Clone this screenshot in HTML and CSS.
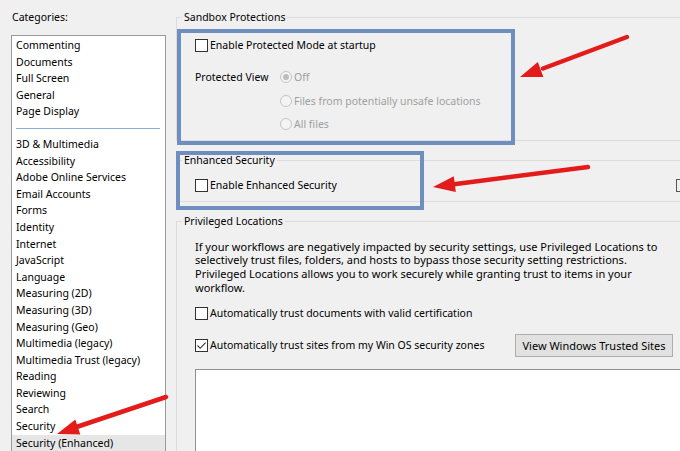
FILE: index.html
```html
<!DOCTYPE html>
<html lang="en">

<head>
    <meta charset="UTF-8">
    <meta name="viewport" content="width=device-width, initial-scale=1.0">
    <title>Preferences - Security (Enhanced)</title>

    <link rel="stylesheet" href="styles.css">
</head>

<body>

    <div class="window">
        <aside class="sidebar">
            <div class="cat-label">Categories:</div>
            <ul class="cat-list">
                <li>Commenting</li>
                <li>Documents</li>
                <li>Full Screen</li>
                <li>General</li>
                <li>Page Display</li>
                <li class="sep"></li>
                <li>3D &amp; Multimedia</li>
                <li>Accessibility</li>
                <li>Adobe Online Services</li>
                <li>Email Accounts</li>
                <li>Forms</li>
                <li>Identity</li>
                <li>Internet</li>
                <li>JavaScript</li>
                <li>Language</li>
                <li>Measuring (2D)</li>
                <li>Measuring (3D)</li>
                <li>Measuring (Geo)</li>
                <li>Multimedia (legacy)</li>
                <li>Multimedia Trust (legacy)</li>
                <li>Reading</li>
                <li>Reviewing</li>
                <li>Search</li>
                <li>Security</li>
                <li class="selected">Security (Enhanced)</li>
            </ul>
        </aside>

        <main class="panel">
            <fieldset class="group sandbox">
                <legend>Sandbox Protections</legend>
                <label class="check first"><span class="box"></span>Enable Protected Mode at startup</label>
                <div class="pview">
                    <span class="pview-label">Protected View</span>
                    <div class="radios">
                        <label class="radio on"><span class="circle"></span>Off</label>
                        <label class="radio"><span class="circle"></span>Files from potentially unsafe locations</label>
                        <label class="radio"><span class="circle"></span>All files</label>
                    </div>
                </div>
            </fieldset>

            <fieldset class="group enhanced">
                <legend>Enhanced Security</legend>
                <div class="enh-row">
                    <label class="check"><span class="box"></span>Enable Enhanced Security</label>
                    <span class="box cut"></span>
                </div>
            </fieldset>

            <fieldset class="group privileged">
                <legend>Privileged Locations</legend>
                <p class="info">If your workflows are negatively impacted by security settings, use Privileged Locations to<br>selectively trust files, folders, and hosts to bypass those security setting restrictions.<br>Privileged Locations allows you to work securely while granting trust to items in your<br>workflow.</p>
                <label class="check cert"><span class="box"></span>Automatically trust documents with valid certification</label>
                <div class="zone-row">
                    <label class="check"><span class="box checked"><svg width="11" height="11" viewBox="0 0 11 11"><polyline points="1.5,5.5 4.2,8.3 9.6,2.6" fill="none" stroke="#333" stroke-width="1.1"/></svg></span>Automatically trust sites from my Win OS security zones</label>
                    <button class="btn">View Windows Trusted Sites</button>
                </div>
                <div class="loc-box"></div>
            </fieldset>
        </main>

        <!-- annotations drawn on top of the screenshot -->
        <div class="mark mark-sandbox"></div>
        <div class="mark mark-enhanced"></div>
        <svg class="arrows" width="680" height="451" viewBox="0 0 680 451">
            <g stroke="#e31b1b" stroke-width="4.5" stroke-linecap="round" fill="#e31b1b">
                <line x1="627" y1="37" x2="543" y2="68.5"/>
                <line x1="588" y1="167" x2="452" y2="184.5"/>
                <line x1="166" y1="397" x2="75" y2="427.5"/>
            </g>
            <g fill="#e31b1b">
                <polygon points="520,77 537.8,61.9 543.4,76.9"/>
                <polygon points="433,187 453.8,176.3 455.8,192.1"/>
                <polygon points="57,434 75.3,419.4 80.3,434.6"/>
            </g>
        </svg>
    </div>

</body>

</html>
```

FILE: styles.css
```css
body {
    margin: 0;
    background-color: #f0f0f0;
    font-family: "Noto Sans", "Open Sans", sans-serif;
    font-size: 10.5px;
    color: #000;
}

.window {
    position: relative;
    display: flex;
    width: 680px;
    height: 451px;
    overflow: hidden;
}

/* left column */

.sidebar {
    width: 176px;
    padding-left: 11px;
    box-sizing: border-box;
    flex-shrink: 0;
}

.cat-label {
    margin-top: 9px;
    margin-bottom: 10px;
    margin-left: 1px;
    line-height: 16px;
}

.cat-list {
    list-style: none;
    margin: 0;
    padding: 1px 0 0 0;
    width: 155px;
    height: 430px;
    box-sizing: border-box;
    background-color: #fff;
    border: 1px solid #9a9a9a;
    border-bottom: none;
}

.cat-list li {
    line-height: 16.6px;
    padding-left: 4px;
    white-space: nowrap;
}

.cat-list .sep {
    height: 16px;
    margin: 0 5px 0 4px;
    padding: 0;
    position: relative;
}

.cat-list .sep::after {
    content: "";
    position: absolute;
    left: 0;
    right: 0;
    top: 8px;
    border-top: 1px solid #8aaed6;
}

.cat-list .selected {
    background-color: #e6e6e6;
}

/* right panel */

.panel {
    flex: 1;
    padding-top: 9px;
    min-width: 0;
}

.group {
    margin: 0;
    padding: 0 0 8px 0;
    border: 1px solid #dcdcdc;
    border-right: none;
    min-width: 0;
}

.group legend {
    margin-left: 5px;
    padding: 0 2px;
    line-height: 16px;
}

.check {
    display: flex;
    align-items: center;
    line-height: 16px;
    margin-left: 18px;
    white-space: nowrap;
}

.box {
    width: 13px;
    height: 13px;
    box-sizing: border-box;
    border: 1px solid #333;
    background-color: #fff;
    margin-right: 2px;
    flex-shrink: 0;
    display: flex;
    align-items: center;
    justify-content: center;
}

.sandbox .first {
    margin-top: 12px;
}

.pview {
    display: flex;
    margin-top: 16px;
    margin-left: 18px;
    line-height: 16px;
}

.pview-label {
    width: 85px;
}

.radios {
    display: flex;
    flex-direction: column;
    gap: 7.5px;
}

.radio {
    display: flex;
    align-items: center;
    color: #a0a0a0;
    white-space: nowrap;
}

.circle {
    width: 12px;
    height: 12px;
    box-sizing: border-box;
    border: 1px solid #c4c4c4;
    border-radius: 50%;
    background-color: #f4f4f4;
    margin-right: 2px;
    display: flex;
    align-items: center;
    justify-content: center;
}

.radio.on .circle::after {
    content: "";
    width: 6px;
    height: 6px;
    border-radius: 50%;
    background-color: #bdbdbd;
}

.enhanced {
    margin-top: 11px;
}

.enh-row {
    display: flex;
    align-items: center;
    margin-top: 9px;
}

.box.cut {
    margin-left: auto;
    margin-right: -9px;
    background-color: #f0f0f0;
    border-color: #555;
}

.privileged {
    margin-top: 11px;
    border-bottom: none;
}

.info {
    margin: 10.5px 0 0 18px;
    font-size: 11px;
    line-height: 13.9px;
    white-space: nowrap;
}

.cert {
    margin-top: 10px;
}

.zone-row {
    display: flex;
    align-items: center;
    margin-top: 12.5px;
    height: 23px;
}

.btn {
    margin-left: auto;
    margin-right: 7px;
    width: 158px;
    height: 23px;
    padding: 0;
    font-family: inherit;
    font-size: 11px;
    color: #000;
    background-color: #e1e1e1;
    border: 1px solid #adadad;
}

.loc-box {
    margin: 12px 0 0 18px;
    height: 100px;
    background-color: #fff;
    border: 1px solid #8f8f8f;
    border-right: none;
}

/* red / blue annotations */

.mark {
    position: absolute;
    box-sizing: border-box;
    border: 4px solid #6e8ebf;
}

.mark-sandbox {
    left: 177px;
    top: 29px;
    width: 338px;
    height: 116px;
}

.mark-enhanced {
    left: 176px;
    top: 151px;
    width: 248px;
    height: 59px;
}

.arrows {
    position: absolute;
    left: 0;
    top: 0;
    pointer-events: none;
}
```
